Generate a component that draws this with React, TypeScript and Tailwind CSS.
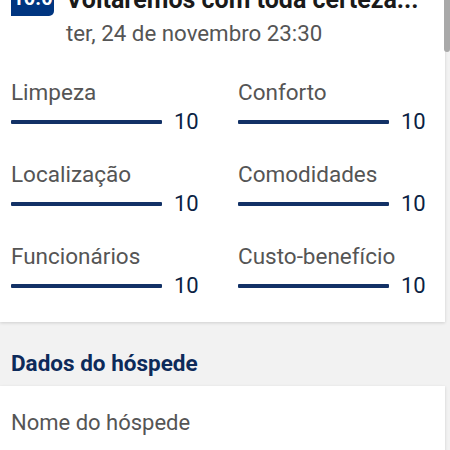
import React from "react";

const items = [
  ["Limpeza", "Conforto"],
  ["Localização", "Comodidades"],
  ["Funcionários", "Custo-benefício"],
];

function Score({ label }: { label: string }) {
  return (
    <div className="flex flex-col">
      <div className="text-[22.5px] leading-[26px] text-[#555555]">{label}</div>
      <div className="mt-[4px] flex items-center gap-[12px]">
        <div className="h-[4px] w-[151px] shrink-0 rounded-[1px] bg-[#123166]" />
        <div className="text-[22px] leading-[26px] text-[#0b1f44]">10</div>
      </div>
    </div>
  );
}

export default function App() {
  return (
    <div
      className="relative h-[450px] w-[450px] overflow-hidden bg-[#f2f2f2]"
      style={{ fontFamily: "Roboto, 'Noto Sans', sans-serif" }}
    >
      <div className="w-[445px] bg-white pb-[23px] pl-[11px] shadow-[0_1px_3px_rgba(0,0,0,0.15)]">
        <div className="-mt-[20px] flex items-start">
          <div className="flex h-[36px] w-[43px] shrink-0 items-center justify-center rounded-t-[5px] rounded-br-[5px] bg-[#003580] text-[20px] font-bold text-white">
            10.0
          </div>
          <div className="ml-[12px] mt-[6px] flex min-w-0 flex-col">
            <div className="whitespace-nowrap text-[25px] font-bold leading-[28px] text-[#1a1a1a]">
              Voltaremos com toda certeza...
            </div>
            <div className="mt-[6px] whitespace-nowrap text-[22.3px] leading-[26px] text-[#555555]">
              ter, 24 de novembro 23:30
            </div>
          </div>
        </div>
        <div className="mt-[33px] grid grid-cols-[227px_227px] gap-y-[26px]">
          {items.map(([a, b]) => (
            <React.Fragment key={a}>
              <Score label={a} />
              <Score label={b} />
            </React.Fragment>
          ))}
        </div>
      </div>
      <div className="h-[64px] pl-[11px] pt-[28px]">
        <div className="text-[22.5px] font-bold leading-[26px] text-[#0d2a5a]">Dados do hóspede</div>
      </div>
      <div className="h-[100px] w-[445px] bg-white pl-[11px] pt-[24px] shadow-[0_1px_3px_rgba(0,0,0,0.15)]">
        <div className="text-[22px] leading-[26px] text-[#555555]">Nome do hóspede</div>
      </div>
      <div className="absolute right-0 top-0 h-[52px] w-[6px] rounded-b-[3px] bg-[#a9a9a9]" />
    </div>
  );
}
